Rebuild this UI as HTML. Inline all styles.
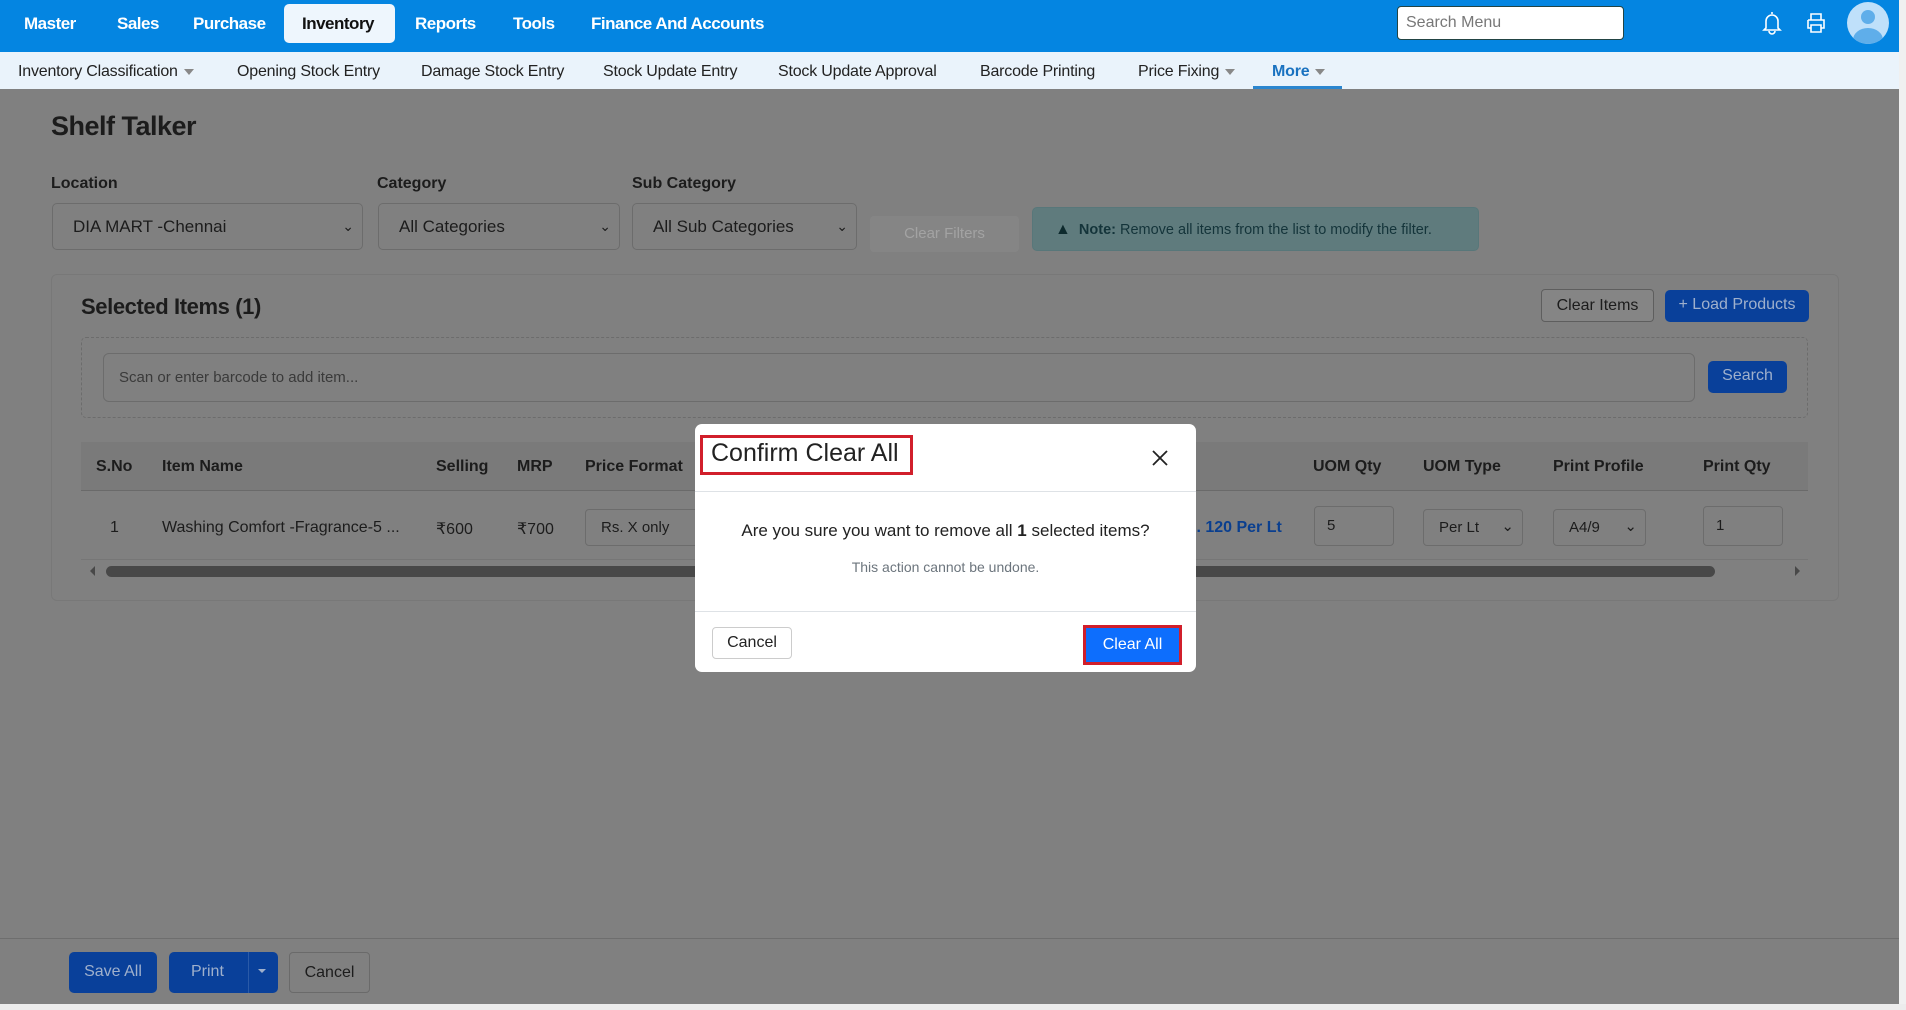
<!DOCTYPE html>
<html><head><meta charset="utf-8">
<style>
*{box-sizing:border-box;margin:0;padding:0}
body{width:1906px;height:1010px;overflow:hidden;position:relative;font-family:"Liberation Sans",sans-serif;background:#808080;color:#1c1c1c}
.a{position:absolute;white-space:nowrap}
.top{left:0;top:0;width:1906px;height:52px;background:#0485e1}
.nav{top:14px;font-size:17px;font-weight:bold;color:#fff;letter-spacing:-0.5px}
.sub{left:0;top:52px;width:1906px;height:37px;background:#eaf3fb}
.sn{top:63px;font-size:16px;color:#222;letter-spacing:-0.2px}
.caret{display:inline-block;width:0;height:0;border-left:5px solid transparent;border-right:5px solid transparent;border-top:6px solid #888;margin-left:6px;vertical-align:middle}
.lbl{top:175px;font-size:16px;font-weight:bold}
.sel{top:203px;height:47px;border:1px solid #6c6c6c;border-radius:5px;background:#808080;font-size:17px;padding:13px 20px}
.chev{position:absolute;right:8px;top:14px;font-size:14px}
.th{top:458px;font-size:16px;font-weight:bold}
.td{top:519px;font-size:16px}
.inp{border:1px solid #6c6c6c;border-radius:4px;background:#808080;font-size:15px}
.bb{background:#09409a;color:#9fb0cc;border-radius:5px;font-size:16px;text-align:center}
</style></head><body>
<div class="a top"></div>
<div class="a" style="left:284px;top:4px;width:111px;height:39px;background:#eef6fd;border-radius:5px"></div>
<div class="a nav" style="left:24px">Master</div>
<div class="a nav" style="left:117px">Sales</div>
<div class="a nav" style="left:193px">Purchase</div>
<div class="a nav" style="left:302px;color:#111">Inventory</div>
<div class="a nav" style="left:415px">Reports</div>
<div class="a nav" style="left:513px">Tools</div>
<div class="a nav" style="left:591px">Finance And Accounts</div>
<div class="a" style="left:1397px;top:6px;width:227px;height:34px;background:#fff;border:1px solid #244;border-radius:4px;font-size:16px;color:#777;padding:7px 8px">Search Menu</div>
<svg class="a" style="left:1761px;top:10px" width="22" height="26" viewBox="0 0 22 26"><path d="M11 2v2M5 18V11a6 6 0 0 1 12 0v7l2 2H3z M8 21a3 3 0 0 0 6 0" fill="none" stroke="#fff" stroke-width="1.6"/></svg>
<svg class="a" style="left:1805px;top:12px" width="22" height="22" viewBox="0 0 22 22"><path d="M6 8V2h10v6M3 8h16v8h-3M6 16H3V8M6 13h10v7H6z" fill="none" stroke="#fff" stroke-width="1.6"/></svg>
<div class="a" style="left:1847px;top:2px;width:42px;height:42px;border-radius:50%;background:#bfe0fa;overflow:hidden"><div style="position:absolute;left:14px;top:8px;width:14px;height:14px;border-radius:50%;background:#5faeea"></div><div style="position:absolute;left:6px;top:26px;width:30px;height:24px;border-radius:50%;background:#5faeea"></div></div>

<div class="a sub"></div>
<div class="a sn" style="left:18px">Inventory Classification<span class="caret"></span></div>
<div class="a sn" style="left:237px">Opening Stock Entry</div>
<div class="a sn" style="left:421px">Damage Stock Entry</div>
<div class="a sn" style="left:603px">Stock Update Entry</div>
<div class="a sn" style="left:778px">Stock Update Approval</div>
<div class="a sn" style="left:980px">Barcode Printing</div>
<div class="a sn" style="left:1138px">Price Fixing<span class="caret"></span></div>
<div class="a sn" style="left:1272px;color:#1a72c0;font-weight:bold">More<span class="caret"></span></div>
<div class="a" style="left:1253px;top:86px;width:89px;height:3px;background:#2b86cf"></div>
<div class="a" style="left:1899px;top:0;width:7px;height:1010px;background:#f0f0f0"></div>
<div class="a" style="left:0;top:1004px;width:1906px;height:6px;background:#ececec"></div>

<div class="a" style="left:51px;top:111px;font-size:27px;font-weight:bold;letter-spacing:-0.5px">Shelf Talker</div>
<div class="a lbl" style="left:51px">Location</div>
<div class="a lbl" style="left:377px">Category</div>
<div class="a lbl" style="left:632px">Sub Category</div>
<div class="a sel" style="left:52px;width:311px">DIA MART -Chennai<span class="chev">&#8964;</span></div>
<div class="a sel" style="left:378px;width:242px">All Categories<span class="chev">&#8964;</span></div>
<div class="a sel" style="left:632px;width:225px">All Sub Categories<span class="chev">&#8964;</span></div>
<div class="a" style="left:870px;top:216px;width:149px;height:36px;background:#858585;border-radius:4px;color:#a3a3a3;font-size:15px;text-align:center;padding-top:9px">Clear Filters</div>
<div class="a" style="left:1032px;top:207px;width:447px;height:44px;background:#5f7b7d;border:1px solid #58777a;border-radius:5px;font-size:14.5px;color:#14343a;padding:13px 0 0 22px"><span style="font-size:16px;color:#0d2a2d">&#9650;</span>&nbsp; <b>Note:</b> Remove all items from the list to modify the filter.</div>

<div class="a" style="left:51px;top:274px;width:1788px;height:327px;border:1px solid #787878;border-radius:6px"></div>
<div class="a" style="left:81px;top:294px;font-size:22px;font-weight:bold;letter-spacing:-0.4px">Selected Items (1)</div>
<div class="a" style="left:1541px;top:289px;width:113px;height:33px;border:1px solid #5e5e5e;border-radius:4px;background:#858585;font-size:16px;text-align:center;padding-top:7px">Clear Items</div>
<div class="a bb" style="left:1665px;top:290px;width:144px;height:32px;padding-top:6px">+ Load Products</div>
<div class="a" style="left:81px;top:337px;width:1727px;height:81px;border:1px dashed #6c6c6c;border-radius:5px"></div>
<div class="a inp" style="left:103px;top:353px;width:1592px;height:49px;border-radius:6px;color:#3a3a3a;padding:15px 15px">Scan or enter barcode to add item...</div>
<div class="a bb" style="left:1708px;top:361px;width:79px;height:32px;padding-top:6px">Search</div>

<div class="a" style="left:81px;top:442px;width:1727px;height:49px;background:#7a7a7a;border-bottom:1px solid #6a6a6a"></div>
<div class="a th" style="left:96px">S.No</div>
<div class="a th" style="left:162px">Item Name</div>
<div class="a th" style="left:436px">Selling</div>
<div class="a th" style="left:517px">MRP</div>
<div class="a th" style="left:585px">Price Format</div>
<div class="a th" style="left:1313px">UOM Qty</div>
<div class="a th" style="left:1423px">UOM Type</div>
<div class="a th" style="left:1553px">Print Profile</div>
<div class="a th" style="left:1703px">Print Qty</div>
<div class="a" style="left:81px;top:559px;width:1727px;height:1px;background:#767676"></div>
<div class="a td" style="left:110px">1</div>
<div class="a td" style="left:162px">Washing Comfort -Fragrance-5 ...</div>
<div class="a td" style="left:436px">₹600</div>
<div class="a td" style="left:517px">₹700</div>
<div class="a inp" style="left:585px;top:509px;width:120px;height:37px;padding:9px 15px">Rs. X only</div>
<div class="a td" style="left:1176px;color:#0a3f8f;font-weight:bold">Rs. 120 Per Lt</div>
<div class="a inp" style="left:1314px;top:506px;width:80px;height:40px;padding:10px 12px">5</div>
<div class="a inp" style="left:1423px;top:509px;width:100px;height:37px;padding:9px 15px">Per Lt<span style="position:absolute;right:8px;top:7px">&#8964;</span></div>
<div class="a inp" style="left:1553px;top:509px;width:93px;height:37px;padding:9px 15px">A4/9<span style="position:absolute;right:8px;top:7px">&#8964;</span></div>
<div class="a inp" style="left:1703px;top:506px;width:80px;height:40px;padding:10px 12px">1</div>
<div class="a" style="left:106px;top:566px;width:1609px;height:11px;border-radius:6px;background:#484848"></div>
<div class="a" style="left:90px;top:566px;border-top:5px solid transparent;border-bottom:5px solid transparent;border-right:5px solid #484848"></div>
<div class="a" style="left:1795px;top:566px;border-top:5px solid transparent;border-bottom:5px solid transparent;border-left:5px solid #484848"></div>

<div class="a" style="left:0;top:938px;width:1899px;height:1px;background:#6e6e6e"></div>
<div class="a bb" style="left:69px;top:952px;width:88px;height:41px;padding-top:11px">Save All</div>
<div class="a bb" style="left:169px;top:952px;width:109px;height:41px"><span style="position:absolute;left:22px;top:11px">Print</span><span style="position:absolute;left:79px;top:0;width:1px;height:41px;background:#2a5aa8"></span><span style="position:absolute;left:89px;top:17px;border-left:4px solid transparent;border-right:4px solid transparent;border-top:4px solid #9fb0cc"></span></div>
<div class="a" style="left:289px;top:952px;width:81px;height:41px;border:1px solid #6a6a6a;border-radius:4px;font-size:16px;text-align:center;padding-top:11px">Cancel</div>

<div class="a" style="left:695px;top:424px;width:501px;height:248px;background:#fff;border-radius:7px">
 <div class="a" style="left:5px;top:11px;width:213px;height:40px;border:3px solid #d11f2b"></div>
 <div class="a" style="left:16px;top:15px;font-size:25px;color:#222">Confirm Clear All</div>
 <svg class="a" style="left:456px;top:25px" width="18" height="18" viewBox="0 0 18 18"><path d="M2 2L16 16M16 2L2 16" stroke="#222" stroke-width="1.8"/></svg>
 <div class="a" style="left:0;top:67px;width:501px;height:1px;background:#dee2e6"></div>
 <div class="a" style="left:0;top:97px;width:501px;text-align:center;font-size:17px;color:#222">Are you sure you want to remove all <b>1</b> selected items?</div>
 <div class="a" style="left:0;top:135px;width:501px;text-align:center;font-size:14px;color:#6c757d">This action cannot be undone.</div>
 <div class="a" style="left:0;top:187px;width:501px;height:1px;background:#dee2e6"></div>
 <div class="a" style="left:17px;top:203px;width:80px;height:32px;border:1px solid #ccc;border-radius:4px;font-size:16px;text-align:center;padding-top:6px;color:#222">Cancel</div>
 <div class="a" style="left:388px;top:201px;width:99px;height:40px;border:3px solid #d11f2b;background:#0d6efd;color:#fff;font-size:16px;text-align:center;padding-top:8px">Clear All</div>
</div>
</body></html>
